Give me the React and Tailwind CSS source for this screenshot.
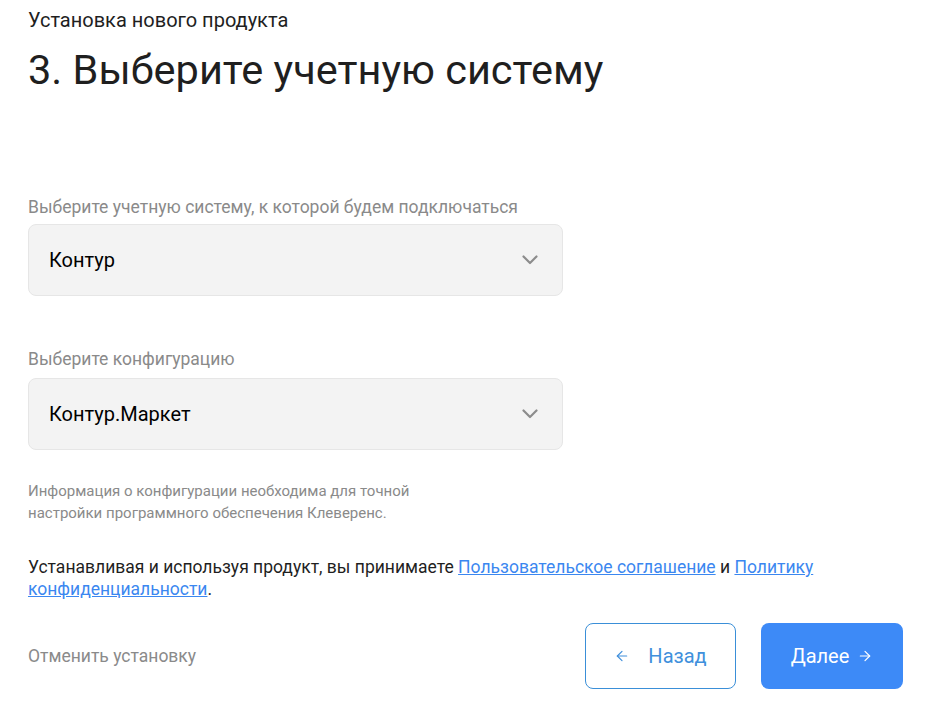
import { ArrowLeft, ArrowRight } from 'lucide-react';

const Chevron = () => (
    <svg width="16" height="10" viewBox="0 0 16 10" fill="none">
        <path d="M1.5 1.5 L8 8 L14.5 1.5" stroke="#8c8c8c" strokeWidth="2.2" strokeLinecap="round" strokeLinejoin="round" />
    </svg>
);

const Select = ({ value }) => (
    <div className="w-[535px] h-[72px] bg-[#f3f3f3] border border-[#e6e6e6] rounded-[8px] flex items-center justify-between pl-[20px] pr-[24px]">
        <span className="text-[20px] text-black">{value}</span>
        <Chevron />
    </div>
);

const App = () => {
    return (
        <div className="w-[927px] h-[712px] bg-white pl-[28px] pr-[24px] pt-[8px] font-['Roboto',sans-serif] text-[#222]">
            <div className="text-[20px] leading-[24px] text-[#1f1f1f]">Установка нового продукта</div>
            <h1 className="text-[41.5px] leading-[48px] mt-[14px] text-[#1f1f1f]">3. Выберите учетную систему</h1>

            <div className="mt-[102px] text-[17.5px] leading-[22px] text-[#8a8a8a]">
                Выберите учетную систему, к которой будем подключаться
            </div>
            <div className="mt-[6px]">
                <Select value="Контур" />
            </div>

            <div className="mt-[52px] text-[17.5px] leading-[22px] text-[#8a8a8a]">Выберите конфигурацию</div>
            <div className="mt-[8px]">
                <Select value="Контур.Маркет" />
            </div>

            <div className="mt-[30px] max-w-[420px] text-[15px] leading-[22px] text-[#8a8a8a]">
                Информация о конфигурации необходима для точной настройки программного обеспечения Клеверенс.
            </div>

            <div className="mt-[32px] text-[17.5px] leading-[22px] text-[#1f1f1f]">
                Устанавливая и используя продукт, вы принимаете{' '}
                <a href="#" className="text-[#3b87f0] underline">Пользовательское соглашение</a> и{' '}
                <a href="#" className="text-[#3b87f0] underline">Политику конфиденциальности</a>.
            </div>

            <div className="mt-[23px] flex items-center justify-between">
                <button className="text-[17.5px] text-[#8a8a8a]">Отменить установку</button>
                <div className="flex gap-[25px]">
                    <button className="w-[151px] h-[66px] rounded-[8px] border border-[#3a8fd8] text-[#4090dc] text-[20px] flex items-center justify-center gap-[18px]">
                        <ArrowLeft size={16} strokeWidth={1.8} />
                        <span>Назад</span>
                    </button>
                    <button className="w-[142px] h-[66px] rounded-[8px] bg-[#3d8af7] text-white text-[20px] flex items-center justify-center gap-[8px]">
                        <span>Далее</span>
                        <ArrowRight size={16} strokeWidth={1.8} />
                    </button>
                </div>
            </div>
        </div>
    );
};

export default App;
